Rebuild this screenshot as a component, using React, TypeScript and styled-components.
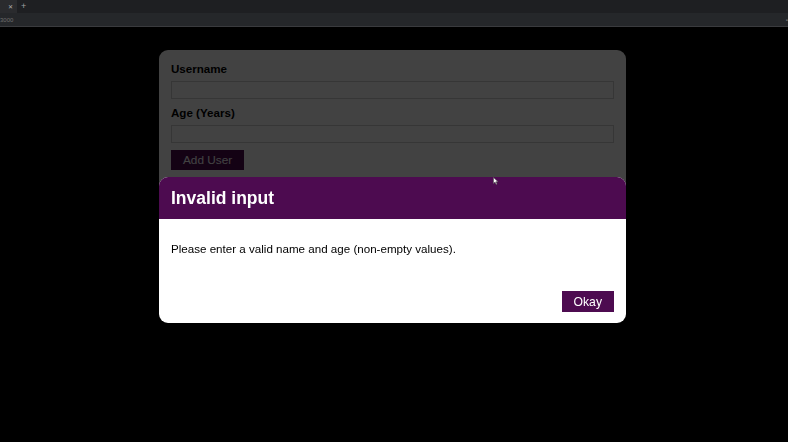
import React from "react";
import styled, { createGlobalStyle } from "styled-components";

const Global = createGlobalStyle`
  html, body { margin: 0; padding: 0; background: #000; }
  body { font-family: "Liberation Sans", Arial, sans-serif; width: 788px; height: 442px; overflow: hidden; }
`;

const Chrome = styled.div`
  display: flex;
  flex-direction: column;
  height: 27px;
`;

const TabBar = styled.div`
  height: 13px;
  background: #1e1f22;
  display: flex;
  align-items: center;
`;

const Tab = styled.div`
  width: 17px;
  height: 13px;
  background: #2a2b2e;
  display: flex;
  align-items: center;
  justify-content: center;
  padding-left: 2px;
  box-sizing: border-box;
`;

const TabClose = styled.span`
  font-size: 6px;
  color: #b0b0b0;
  line-height: 1;
  margin-left: 2px;
`;

const NewTab = styled.span`
  font-size: 9px;
  color: #a0a0a0;
  margin-left: 4px;
  line-height: 1;
`;

const AddressBar = styled.div`
  height: 13px;
  background: #25272a;
  border-bottom: 1px solid #3a3b3e;
  display: flex;
  align-items: center;
  justify-content: space-between;
  font-size: 6px;
  color: #6e6e6e;
`;

const Page = styled.main`
  display: flex;
  justify-content: center;
  padding: 23px 3px 0 0;
`;

const Card = styled.form`
  width: 467px;
  box-sizing: border-box;
  background: #fff;
  border-radius: 9px;
  padding: 12px 12px 20px;
  display: flex;
  flex-direction: column;
`;

const Label = styled.label`
  font-weight: bold;
  font-size: 11.6px;
  line-height: 14px;
  color: #000;
  margin-bottom: 5px;
`;

const Input = styled.input`
  height: 18px;
  box-sizing: border-box;
  border: 1px solid #d0d0d0;
  margin: 0 0 7px;
  padding: 0 4px;
  font: inherit;
`;

const Button = styled.button`
  align-self: flex-start;
  background: #4d0b50;
  color: #fff;
  border: 1px solid #4d0b50;
  font-family: "Liberation Sans", Arial, sans-serif;
  font-size: 11.8px;
  padding: 0 11px;
  height: 20px;
  cursor: pointer;
`;

const Backdrop = styled.div`
  position: fixed;
  top: 27px;
  left: 0;
  right: 0;
  bottom: 0;
  background: rgba(0, 0, 0, 0.74);
`;

const Modal = styled.div`
  position: fixed;
  top: 177px;
  left: 159px;
  width: 467px;
  background: #fff;
  border-radius: 9px;
  overflow: hidden;
  display: flex;
  flex-direction: column;
`;

const Header = styled.header`
  background: #4d0b50;
  height: 42px;
  display: flex;
  align-items: center;
  padding: 0 12px;
`;

const Title = styled.h2`
  margin: 0;
  color: #fff;
  font-size: 17.5px;
  font-weight: bold;
`;

const Content = styled.div`
  padding: 23px 12px 0;
  font-size: 11.6px;
  line-height: 14px;
  color: #000;
  height: 49px;
`;

const Actions = styled.footer`
  display: flex;
  justify-content: flex-end;
  padding: 0 12px 11px;
`;

const OkayButton = styled(Button)`
  height: 21px;
  padding: 0 11px;
  font-size: 12.2px;
`;

const Cursor = styled.svg`
  position: fixed;
  left: 493px;
  top: 177px;
`;

export default function App() {
  return (
    <>
      <Global />
      <Chrome>
        <TabBar>
          <Tab>
            <TabClose>✕</TabClose>
          </Tab>
          <NewTab>+</NewTab>
        </TabBar>
        <AddressBar>
          <span>3000</span>
          <span>▪</span>
        </AddressBar>
      </Chrome>
      <Page>
        <Card>
          <Label>Username</Label>
          <Input type="text" />
          <Label>Age (Years)</Label>
          <Input type="number" />
          <Button type="button">Add User</Button>
        </Card>
      </Page>
      <Backdrop />
      <Modal>
        <Header>
          <Title>Invalid input</Title>
        </Header>
        <Content>Please enter a valid name and age (non-empty values).</Content>
        <Actions>
          <OkayButton type="button">Okay</OkayButton>
        </Actions>
      </Modal>
      <Cursor width="6" height="8" viewBox="0 0 6 8">
        <path d="M0.5 0.5 L0.5 6.5 L2 5 L3.2 7.5 L4 7.1 L2.9 4.7 L5 4.7 Z" fill="#fff" stroke="#555" strokeWidth="0.6" />
      </Cursor>
    </>
  );
}
